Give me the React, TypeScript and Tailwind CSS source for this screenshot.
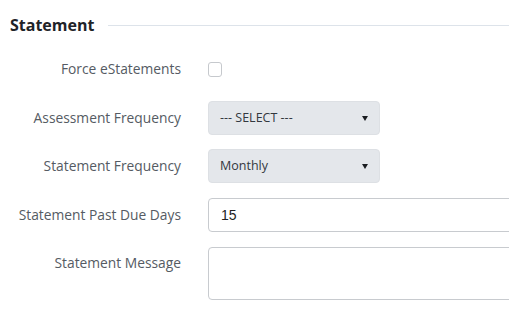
export default function App() {
  const label = "w-[181px] shrink-0 text-right text-[13.8px] text-[#555b63]";
  const selectBox =
    "w-[172px] h-[34px] ml-[27px] flex items-center justify-between rounded-[4px] bg-[#e4e7eb] border border-[#dde0e4] pl-[11px] pr-[11px] text-[12.5px] text-[#33383e]";
  const caret =
    "w-0 h-0 border-l-[3.5px] border-r-[3.5px] border-t-[5px] border-l-transparent border-r-transparent border-t-[#1a1d21]";

  return (
    <div className="w-[509px] h-[314px] bg-white overflow-hidden font-['Open_Sans',sans-serif]">
      <div className="flex items-center pl-[10px] pt-[14px]">
        <h2 className="text-[16px] font-bold text-[#1f2328] leading-[22px]">Statement</h2>
        <div className="flex-1 h-px bg-[#dde3ea] ml-[14px] mt-[1px]" />
      </div>

      <div className="flex items-center mt-[25px] h-[16px]">
        <span className={label}>Force eStatements</span>
        <span className="ml-[27px] w-[14px] h-[15px] rounded-[3px] border border-[#c6c9cd] bg-white" />
      </div>

      <div className="flex items-center mt-[24px]">
        <span className={label}>Assessment Frequency</span>
        <div className={selectBox}>
          <span>--- SELECT ---</span>
          <span className={caret} />
        </div>
      </div>

      <div className="flex items-center mt-[14px]">
        <span className={label}>Statement Frequency</span>
        <div className={selectBox}>
          <span>Monthly</span>
          <span className={caret} />
        </div>
      </div>

      <div className="flex items-center mt-[15px]">
        <span className={label}>Statement Past Due Days</span>
        <div className="ml-[27px] flex-1 h-[34px] mr-[-10px] rounded-[4px] border border-[#c8cbcf] bg-white flex items-center pl-[12px] font-['Liberation_Sans',sans-serif] text-[14px] text-[#222]">
          15
        </div>
      </div>

      <div className="flex items-start mt-[15px]">
        <span className={`${label} pt-[6px]`}>Statement Message</span>
        <div className="ml-[27px] flex-1 h-[53px] mr-[-10px] rounded-[4px] border border-[#c8cbcf] bg-white" />
      </div>
    </div>
  );
}
